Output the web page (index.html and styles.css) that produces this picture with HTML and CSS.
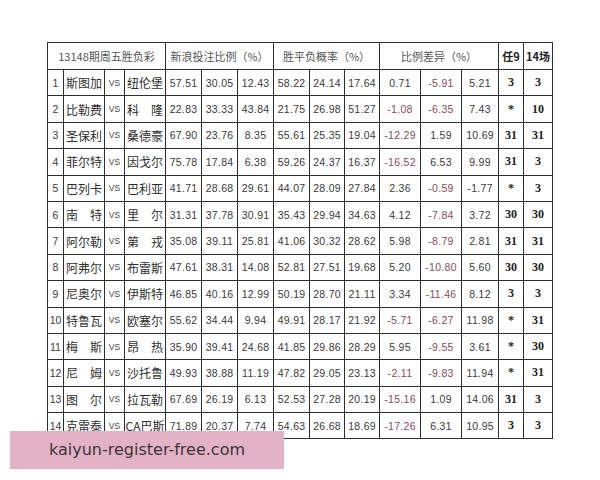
FILE: index.html
```html
<!DOCTYPE html>
<html lang="zh">
<head>
<meta charset="utf-8">
<link rel="stylesheet" href="styles.css">
</head>
<body>
<div class="page">
<table class="grid">
<colgroup>
<col class="c16"><col class="c41"><col class="c20"><col class="c41">
<col class="c36"><col class="c36"><col class="c36">
<col class="c36"><col class="c35"><col class="c35">
<col class="c41"><col class="c41"><col class="c37">
<col class="c25"><col class="c29">
</colgroup>
<thead>
<tr class="head">
<th colspan="4">13148期周五胜负彩</th>
<th colspan="3">新浪投注比例（%）</th>
<th colspan="3">胜平负概率（%）</th>
<th colspan="3">比例差异（%）</th>
<th class="b">任9</th>
<th class="b">14场</th>
</tr>
</thead>
<tbody>
<tr><td class="n">1</td><td class="t">斯图加</td><td class="vs">VS</td><td class="t">纽伦堡</td><td>57.51</td><td>30.05</td><td>12.43</td><td>58.22</td><td>24.14</td><td>17.64</td><td>0.71</td><td class="neg">-5.91</td><td>5.21</td><td class="b">3</td><td class="b">3</td></tr>
<tr><td class="n">2</td><td class="t">比勒费</td><td class="vs">VS</td><td class="t">科　隆</td><td>22.83</td><td>33.33</td><td>43.84</td><td>21.75</td><td>26.98</td><td>51.27</td><td class="neg">-1.08</td><td class="neg">-6.35</td><td>7.43</td><td class="b">*</td><td class="b">10</td></tr>
<tr><td class="n">3</td><td class="t">圣保利</td><td class="vs">VS</td><td class="t">桑德豪</td><td>67.90</td><td>23.76</td><td>8.35</td><td>55.61</td><td>25.35</td><td>19.04</td><td class="neg">-12.29</td><td>1.59</td><td>10.69</td><td class="b">31</td><td class="b">31</td></tr>
<tr><td class="n">4</td><td class="t">菲尔特</td><td class="vs">VS</td><td class="t">因戈尔</td><td>75.78</td><td>17.84</td><td>6.38</td><td>59.26</td><td>24.37</td><td>16.37</td><td class="neg">-16.52</td><td>6.53</td><td>9.99</td><td class="b">31</td><td class="b">3</td></tr>
<tr><td class="n">5</td><td class="t">巴列卡</td><td class="vs">VS</td><td class="t">巴利亚</td><td>41.71</td><td>28.68</td><td>29.61</td><td>44.07</td><td>28.09</td><td>27.84</td><td>2.36</td><td class="neg">-0.59</td><td>-1.77</td><td class="b">*</td><td class="b">3</td></tr>
<tr><td class="n">6</td><td class="t">南　特</td><td class="vs">VS</td><td class="t">里　尔</td><td>31.31</td><td>37.78</td><td>30.91</td><td>35.43</td><td>29.94</td><td>34.63</td><td>4.12</td><td class="neg">-7.84</td><td>3.72</td><td class="b">30</td><td class="b">30</td></tr>
<tr><td class="n">7</td><td class="t">阿尔勒</td><td class="vs">VS</td><td class="t">第　戎</td><td>35.08</td><td>39.11</td><td>25.81</td><td>41.06</td><td>30.32</td><td>28.62</td><td>5.98</td><td class="neg">-8.79</td><td>2.81</td><td class="b">31</td><td class="b">31</td></tr>
<tr><td class="n">8</td><td class="t">阿弗尔</td><td class="vs">VS</td><td class="t">布雷斯</td><td>47.61</td><td>38.31</td><td>14.08</td><td>52.81</td><td>27.51</td><td>19.68</td><td>5.20</td><td class="neg">-10.80</td><td>5.60</td><td class="b">30</td><td class="b">30</td></tr>
<tr><td class="n">9</td><td class="t">尼奥尔</td><td class="vs">VS</td><td class="t">伊斯特</td><td>46.85</td><td>40.16</td><td>12.99</td><td>50.19</td><td>28.70</td><td>21.11</td><td>3.34</td><td class="neg">-11.46</td><td>8.12</td><td class="b">3</td><td class="b">3</td></tr>
<tr><td class="n">10</td><td class="t">特鲁瓦</td><td class="vs">VS</td><td class="t">欧塞尔</td><td>55.62</td><td>34.44</td><td>9.94</td><td>49.91</td><td>28.17</td><td>21.92</td><td class="neg">-5.71</td><td class="neg">-6.27</td><td>11.98</td><td class="b">*</td><td class="b">31</td></tr>
<tr><td class="n">11</td><td class="t">梅　斯</td><td class="vs">VS</td><td class="t">昂　热</td><td>35.90</td><td>39.41</td><td>24.68</td><td>41.85</td><td>29.86</td><td>28.29</td><td>5.95</td><td class="neg">-9.55</td><td>3.61</td><td class="b">*</td><td class="b">30</td></tr>
<tr><td class="n">12</td><td class="t">尼　姆</td><td class="vs">VS</td><td class="t">沙托鲁</td><td>49.93</td><td>38.88</td><td>11.19</td><td>47.82</td><td>29.05</td><td>23.13</td><td class="neg">-2.11</td><td class="neg">-9.83</td><td>11.94</td><td class="b">*</td><td class="b">31</td></tr>
<tr><td class="n">13</td><td class="t">图　尔</td><td class="vs">VS</td><td class="t">拉瓦勒</td><td>67.69</td><td>26.19</td><td>6.13</td><td>52.53</td><td>27.28</td><td>20.19</td><td class="neg">-15.16</td><td>1.09</td><td>14.06</td><td class="b">31</td><td class="b">3</td></tr>
<tr><td class="n">14</td><td class="t">克雷泰</td><td class="vs">VS</td><td class="t">CA巴斯</td><td>71.89</td><td>20.37</td><td>7.74</td><td>54.63</td><td>26.68</td><td>18.69</td><td class="neg">-17.26</td><td>6.31</td><td>10.95</td><td class="b">3</td><td class="b">3</td></tr>
</tbody>
</table>
</div>
<div class="watermark">kaiyun-register-free.com</div>
</body>
</html>
```
FILE: styles.css
```css
html, body {
  margin: 0;
  padding: 0;
  background: #ffffff;
}
.page {
  padding: 42px 0 0 47px;
}
.grid {
  border-collapse: collapse;
  table-layout: fixed;
  width: 506px;
  font-family: "Liberation Sans", "Noto Sans CJK SC", sans-serif;
  font-size: 10.5px;
  letter-spacing: 0.3px;
  color: #3a3a3a;
}
.c16 { width: 16px; }
.c20 { width: 20px; }
.c25 { width: 25px; }
.c29 { width: 29px; }
.c35 { width: 35px; }
.c36 { width: 36px; }
.c37 { width: 37px; }
.c41 { width: 41px; }
.grid th, .grid td {
  border: 1px solid #2e2e2e;
  padding: 0;
  text-align: center;
  white-space: nowrap;
  overflow: hidden;
}
.head {
  height: 27px;
}
.head th {
  font-family: "Noto Sans CJK SC", sans-serif;
  font-weight: normal;
  font-size: 11px;
  letter-spacing: 0;
  color: #555555;
}
.grid tbody tr {
  height: 26.4px;
}
.grid .t {
  font-family: "Noto Sans CJK SC", sans-serif;
  font-size: 12px;
  letter-spacing: 0;
  color: #2f2f2f;
}
.grid .n {
  font-size: 10.5px;
  letter-spacing: 0;
}
.grid .vs {
  font-size: 8.5px;
  letter-spacing: 0;
  color: #444444;
}
.grid .neg {
  color: #8a4a5a;
}
.grid .b {
  font-family: "Liberation Serif", "Noto Sans CJK SC", serif;
  font-weight: bold;
  font-size: 12px;
  letter-spacing: 0;
  color: #222222;
}
.head th.b {
  font-family: "Noto Sans CJK SC", serif;
  font-weight: bold;
  font-size: 11px;
  color: #222222;
}
.watermark {
  position: absolute;
  left: 10px;
  top: 431px;
  width: 274px;
  height: 38px;
  box-sizing: border-box;
  padding-left: 39px;
  background: #e4b2c6;
  font-family: "DejaVu Sans", sans-serif;
  font-size: 16px;
  line-height: 38px;
  color: #383838;
}
```
